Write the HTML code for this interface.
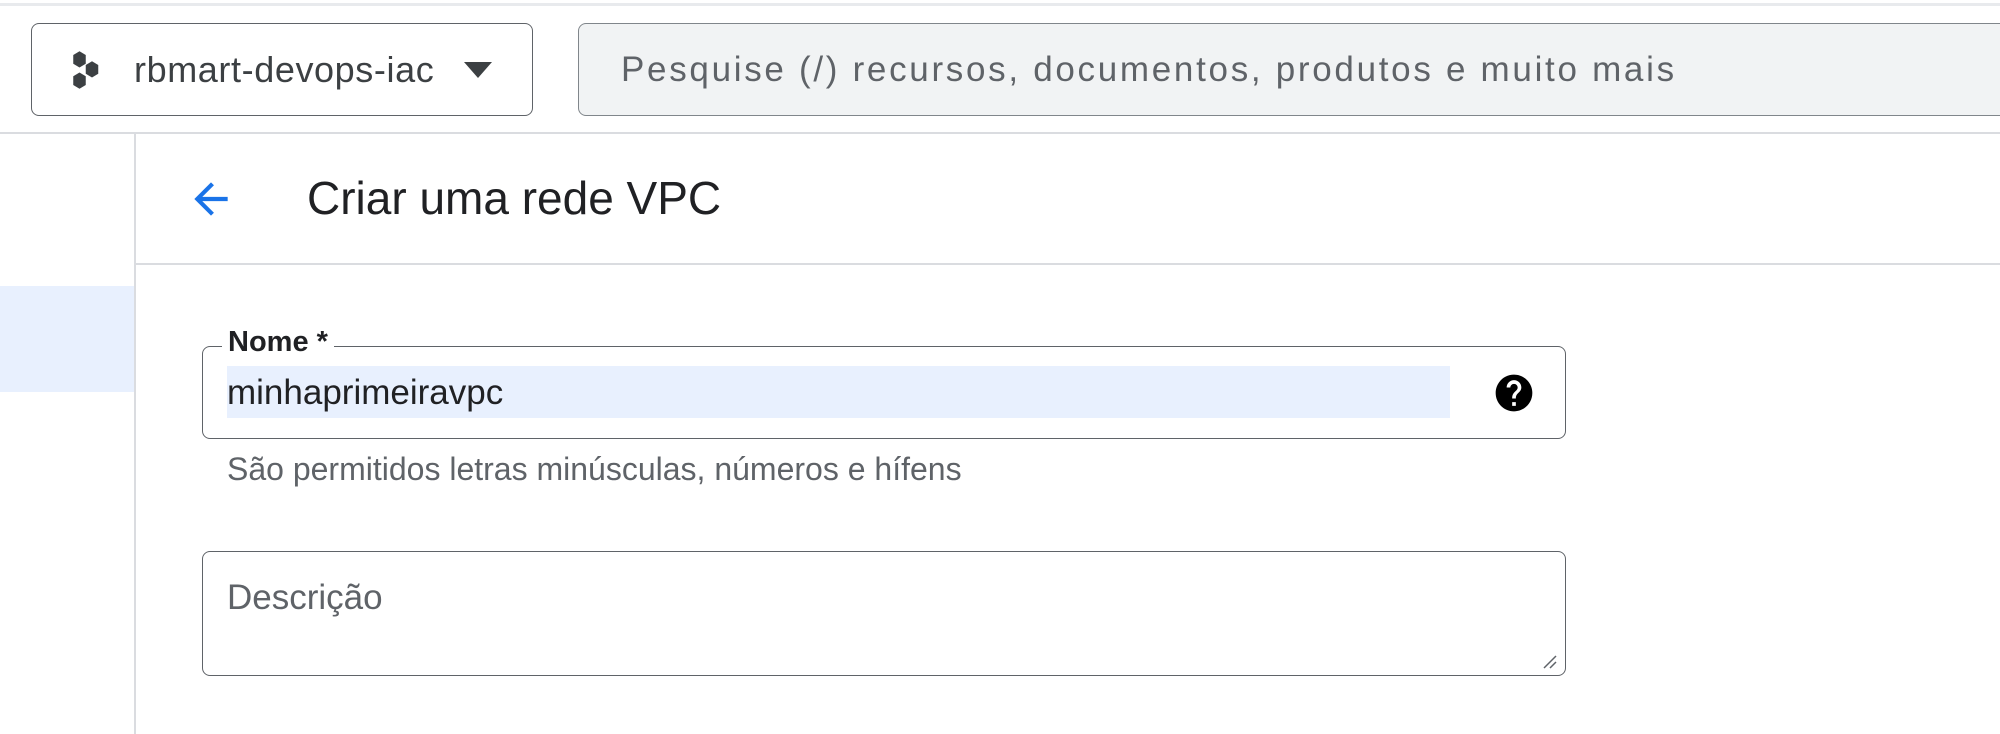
<!DOCTYPE html>
<html><head><meta charset="utf-8"><style>
*{box-sizing:border-box;margin:0;padding:0}
body{width:2000px;height:721px;background:#fff;position:relative;overflow:hidden;font-family:"Liberation Sans",sans-serif;color:#202124}
.a{position:absolute;white-space:nowrap}
</style></head><body>
<div class="a" style="left:0;top:3px;width:2000px;height:3px;background:#e8eaed"></div>
<div class="a" style="left:31px;top:23px;width:502px;height:93px;border:1.5px solid #5f6368;border-radius:8px"></div>
<svg class="a" style="left:62px;top:45px" width="50" height="50" viewBox="0 0 40 40"><g fill="#3c4043"><polygon points="14,5 19,8 19,15 14,18 9,15 9,8"/><polygon points="14,22 19,25 19,32 14,35 9,32 9,25"/><polygon points="24,13 29,16 29,23 24,26 19,23 19,16"/></g></svg>
<div class="a" style="left:134px;top:48px;font-size:36px;line-height:44px;color:#3c4043;letter-spacing:0.6px">rbmart-devops-iac</div>
<svg class="a" style="left:462px;top:60px" width="32" height="20"><polygon points="2,2 30,2 16,18" fill="#3c4043"/></svg>
<div class="a" style="left:578px;top:23px;width:1440px;height:93px;border:1.5px solid #80868b;border-radius:8px;background:#f1f3f4"></div>
<div class="a" style="left:621px;top:48px;font-size:35px;line-height:44px;color:#5f6368;letter-spacing:2.7px">Pesquise (/) recursos, documentos, produtos e muito mais</div>
<div class="a" style="left:0;top:132px;width:2000px;height:2px;background:#dadce0"></div>
<div class="a" style="left:134px;top:134px;width:2px;height:600px;background:#dadce0"></div>
<div class="a" style="left:136px;top:263px;width:1864px;height:2px;background:#dadce0"></div>
<div class="a" style="left:0;top:286px;width:134px;height:106px;background:#e8f0fe"></div>
<svg class="a" style="left:186px;top:174px" width="50" height="50" viewBox="0 0 24 24"><path d="M20 11H7.83l5.59-5.59L12 4l-8 8 8 8 1.41-1.41L7.83 13H20v-2z" fill="#1a73e8"/></svg>
<div class="a" style="left:307px;top:170px;font-size:46px;line-height:56px;color:#202124">Criar uma rede VPC</div>
<div class="a" style="left:202px;top:346px;width:1364px;height:93px;border:1.5px solid #5f6368;border-radius:8px"></div>
<div class="a" style="left:222px;top:325px;padding:0 6px;background:#fff;font-size:29px;font-weight:bold;line-height:34px;color:#202124">Nome *</div>
<div class="a" style="left:227px;top:366px;width:1223px;height:52px;background:#e8f0fe"></div>
<div class="a" style="left:227px;top:372px;font-size:35px;line-height:42px;color:#202124">minhaprimeiravpc</div>
<svg class="a" style="left:1492px;top:371px" width="44" height="44" viewBox="0 0 24 24"><path d="M12 2C6.48 2 2 6.480 2 12s4.48 10 10 10 10-4.48 10-10S17.52 2 12 2zm1 17h-2v-2h2v2zm2.07-7.75l-.9.92C13.45 12.9 13 13.5 13 15h-2v-.5c0-1.1.45-2.1 1.170-2.83l1.24-1.26c.37-.36.59-.86.59-1.41 0-1.1-.9-2-2-2s-2 .9-2 2H8c0-2.21 1.79-4 4-4s4 1.79 4 4c0 .88-.36 1.68-.93 2.25z" fill="#000"/></svg>
<div class="a" style="left:227px;top:449px;font-size:32px;line-height:40px;color:#5f6368">São permitidos letras minúsculas, números e hífens</div>
<div class="a" style="left:202px;top:551px;width:1364px;height:125px;border:1.5px solid #5f6368;border-radius:8px"></div>
<div class="a" style="left:227px;top:577px;font-size:35px;line-height:42px;color:#5f6368">Descrição</div>
<svg class="a" style="left:1540px;top:652px" width="18" height="18"><path d="M4 16L16 4M10 16L16 10" stroke="#5f6368" stroke-width="1.5"/></svg>
</body></html>
